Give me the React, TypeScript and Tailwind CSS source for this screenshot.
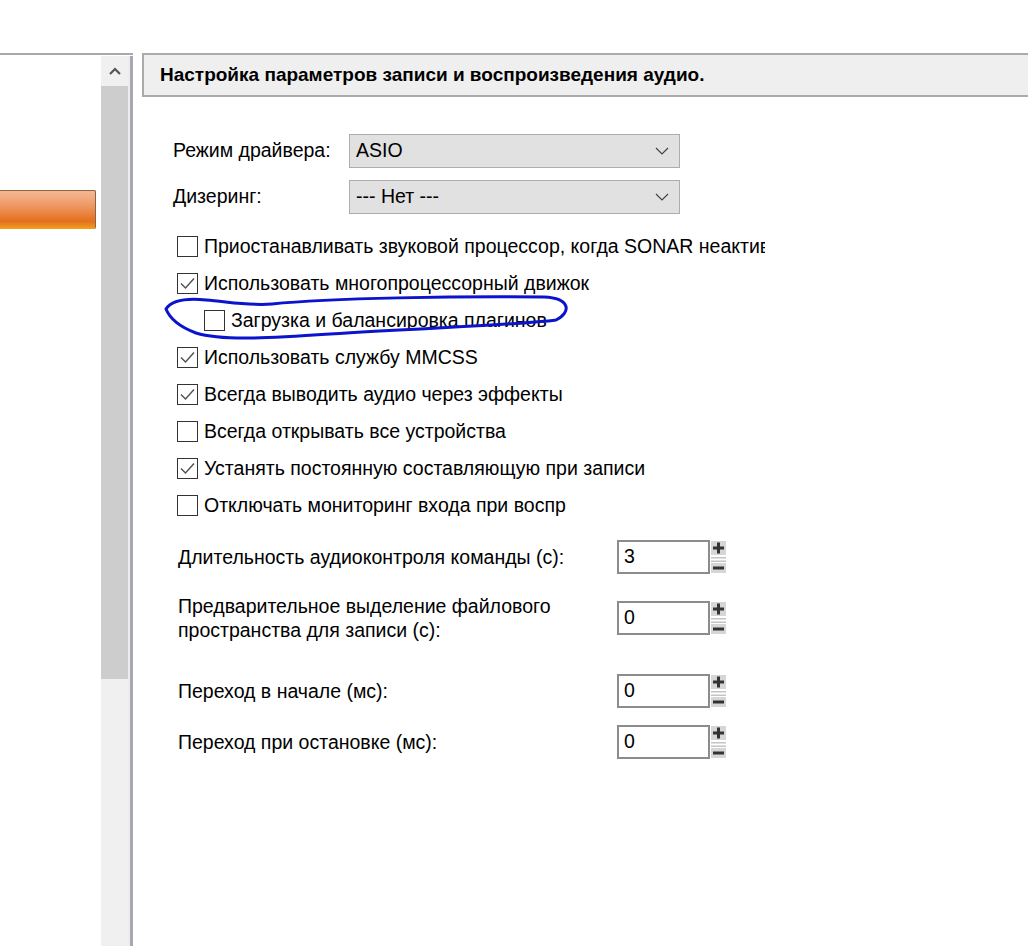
import { ReactNode } from "react";

const checks: { label: string; checked: boolean; nested?: boolean }[] = [
  { label: "Приостанавливать звуковой процессор, когда SONAR неактивен", checked: false },
  { label: "Использовать многопроцессорный движок", checked: true },
  { label: "Загрузка и балансировка плагинов", checked: false, nested: true },
  { label: "Использовать службу MMCSS", checked: true },
  { label: "Всегда выводить аудио через эффекты", checked: true },
  { label: "Всегда открывать все устройства", checked: false },
  { label: "Устанять постоянную составляющую при записи", checked: true },
  { label: "Отключать мониторинг входа при воспр", checked: false },
];

const Chevron = () => (
  <svg width="14" height="8" viewBox="0 0 14 8" className="absolute right-[10px] top-1/2 -translate-y-1/2">
    <path d="M1 1 L7 7 L13 1" fill="none" stroke="#444" strokeWidth="1.2" />
  </svg>
);

const Select = ({ value }: { value: string }) => (
  <div className="relative w-[331px] h-[34px] border border-[#adadad] bg-[#e1e1e1] pl-[6px] flex items-center text-[19.5px] text-black">
    {value}
    <Chevron />
  </div>
);

const CheckBox = ({ checked }: { checked: boolean }) => (
  <div className="w-[21px] h-[21px] border border-[#333] bg-white shrink-0 flex items-center justify-center">
    {checked && (
      <svg width="19" height="19" viewBox="0 0 19 19">
        <path d="M3 9.5 L7.5 14 L16 4.5" fill="none" stroke="#505050" strokeWidth="1.4" />
      </svg>
    )}
  </div>
);

const Spinner = () => (
  <svg width="15" height="32" viewBox="0 0 15 32" className="ml-[1px] shrink-0">
    <rect x="0" y="0" width="15" height="14" fill="#d6d6d6" />
    <rect x="2" y="5.5" width="11" height="3" fill="#333" />
    <rect x="6" y="1.5" width="3" height="11" fill="#333" />
    <rect x="0" y="16" width="15" height="1.5" fill="#c4c4c4" />
    <rect x="0" y="19.5" width="15" height="1.5" fill="#c4c4c4" />
    <rect x="0" y="22" width="15" height="10" fill="#d6d6d6" />
    <rect x="2" y="25.5" width="11" height="3" fill="#333" />
  </svg>
);

const NumRow = ({ label, value, className }: { label: ReactNode; value: string; className: string }) => (
  <div className={`flex items-center ${className}`}>
    <div className="w-[439px] ml-[5px] text-[19.5px] leading-[24px] text-black">{label}</div>
    <div className="w-[93px] h-[34px] border-2 border-[#8c8c8c] bg-white pl-[5px] flex items-center text-[19.5px] text-black">
      {value}
    </div>
    <Spinner />
  </div>
);

export default function App() {
  return (
    <div className="relative w-[1028px] h-[946px] bg-white overflow-hidden font-['Liberation_Sans',Arial,sans-serif]">
      <div className="flex h-full pt-[53px]">
        {/* tree pane with its scrollbar */}
        <div className="w-[133px] shrink-0 flex flex-col border-t-2 border-[#a9a9a9]">
          <div className="flex flex-1 pt-[1px]">
            <div className="w-[101px] flex flex-col">
              <div className="mt-[134px] h-[39px] w-[96px] rounded-r-[2px] border-t border-r border-[#8e6440] bg-[linear-gradient(to_bottom,#f4b893_0%,#f0a070_30%,#eb8748_55%,#e4701e_80%,#f7a11c_100%)]" />
            </div>
            <div className="w-[27px] flex flex-col bg-[#f0f0f0]">
              <div className="h-[30px] flex items-center justify-center">
                <svg width="12" height="8" viewBox="0 0 12 8">
                  <path d="M1 7 L6 2 L11 7" fill="none" stroke="#555" strokeWidth="2.2" />
                </svg>
              </div>
              <div className="h-[593px] bg-[#cdcdcd]" />
              <div className="flex-1" />
            </div>
            <div className="w-[2px] bg-[#ececec]" />
            <div className="w-[3px] bg-[#a7a8b3]" />
          </div>
        </div>

        {/* settings page */}
        <div className="ml-[9px] flex-1 flex flex-col">
          <div className="h-[44px] border-2 border-r-0 border-[#ababab] bg-[#efefef] pl-[16px] flex items-center text-[19px] font-bold text-black whitespace-nowrap">
            Настройка параметров записи и воспроизведения аудио.
          </div>

          <div className="pl-[31px] pt-[37px] flex flex-col">
            <div className="flex items-center">
              <div className="w-[176px] text-[19.5px] text-black">Режим драйвера:</div>
              <Select value="ASIO" />
            </div>
            <div className="flex items-center mt-[12px]">
              <div className="w-[176px] text-[19.5px] text-black">Дизеринг:</div>
              <Select value="--- Нет ---" />
            </div>

            <div className="mt-[14px] ml-[4px] w-[588px] overflow-hidden flex flex-col">
              {checks.map((c) => (
                <div key={c.label} className={`h-[37px] flex items-center whitespace-nowrap ${c.nested ? "pl-[27px]" : ""}`}>
                  <CheckBox checked={c.checked} />
                  <span className="ml-[6px] text-[19.5px] text-black">{c.label}</span>
                </div>
              ))}
            </div>

            <NumRow className="mt-[16px] h-[34px]" label="Длительность аудиоконтроля команды (с):" value="3" />
            <NumRow
              className="mt-[20px] h-[48px]"
              label={
                <>
                  Предварительное выделение файлового
                  <br />
                  пространства для записи (с):
                </>
              }
              value="0"
            />
            <NumRow className="mt-[32px] h-[34px]" label="Переход в начале (мс):" value="0" />
            <NumRow className="mt-[17px] h-[34px]" label="Переход при остановке (мс):" value="0" />
          </div>
        </div>
      </div>

      {/* hand-drawn pen mark */}
      <svg className="absolute inset-0 pointer-events-none" width="1028" height="946" viewBox="0 0 1028 946">
        <path
          d="M166 309 C172 300, 186 298, 206 300 C230 302, 250 306, 272 304 C330 298, 460 296, 544 297 C570 298, 572 312, 556 320 C520 325, 420 328, 330 334 C270 338, 222 341, 196 333 C180 327, 170 319, 166 309"
          fill="none"
          stroke="#0b14cc"
          strokeWidth="3"
          strokeLinecap="round"
        />
      </svg>
    </div>
  );
}
